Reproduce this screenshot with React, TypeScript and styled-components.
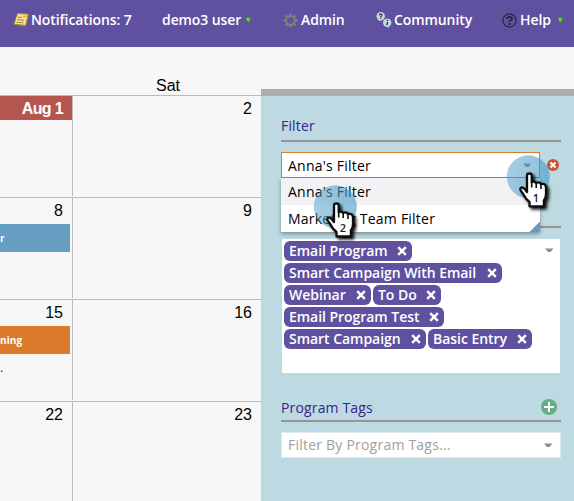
import React from "react";
import styled, { createGlobalStyle, css } from "styled-components";

const GlobalStyle = createGlobalStyle`
  * { box-sizing: border-box; }
  body {
    margin: 0;
    background: #f7f7f7;
    font-family: "Open Sans", "Noto Sans", sans-serif;
    overflow: hidden;
  }
  svg { display: block; flex: none; }
`;

const Page = styled.div`
  width: 574px;
  height: 501px;
  display: flex;
  flex-direction: column;
  overflow: hidden;
  position: relative;
`;

const TopBar = styled.header`
  height: 47px;
  flex: none;
  display: flex;
  background: #5f519f;
  padding: 9px 0 0 13px;
`;

const NavItem = styled.a<{ $width: number }>`
  width: ${(p) => p.$width}px;
  height: 22px;
  flex: none;
  display: flex;
  align-items: center;
  color: #fff;
  font-size: 14px;
  font-weight: 600;
  line-height: 22px;
  white-space: nowrap;
`;

const NavIcon = styled.span<{ $width: number }>`
  width: ${(p) => p.$width}px;
  flex: none;
`;

const NavLabel = styled.span<{ $width: number }>`
  width: ${(p) => p.$width}px;
  flex: none;
  letter-spacing: -0.09px;
`;

const Body = styled.div`
  flex: 1;
  display: flex;
  min-height: 0;
`;

const Calendar = styled.main`
  width: 261px;
  flex: none;
  font-family: "Liberation Sans", Arial, sans-serif;
  color: #000;
`;

const DayNames = styled.div`
  height: 48px;
  display: grid;
  grid-template-columns: 73px 1fr;
  align-items: end;
  text-align: center;
  font-size: 16px;
  line-height: 18px;
  padding: 0 0 0 2px;
`;

const Week = styled.div`
  height: 102px;
  border-top: 1px solid #bcbcbc;
  display: grid;
  grid-template-columns: 73px 1fr;
  padding-bottom: 1px;
`;

const Day = styled.div<{ $divider?: boolean }>`
  ${(p) => p.$divider && css`border-right: 1px solid #bcbcbc;`}
  overflow: hidden;
`;

const DayNumber = styled.div<{ $today?: boolean; $inset: number }>`
  height: 24px;
  padding-right: ${(p) => p.$inset}px;
  text-align: right;
  font-size: 16px;
  line-height: 25px;
  ${(p) =>
    p.$today &&
    css`
      background: #b5554f;
      color: #fff;
      font-weight: bold;
      letter-spacing: -0.65px;
    `}
`;

const CalendarEvent = styled.div<{ $color: string }>`
  width: 70px;
  height: 28px;
  margin-top: 2px;
  background: ${(p) => p.$color};
  color: #fff;
  font: 700 10px/28px "Open Sans", sans-serif;
  letter-spacing: 0.1px;
`;

const More = styled.div`
  font-size: 12px;
  line-height: 28px;
`;

const Panel = styled.aside`
  flex: 1;
  margin-top: 42px;
  border-top: 7px solid #adacb1;
  background: #bdd9e1;
  padding: 20px 13px 0 20px;
`;

const SectionTitle = styled.h2<{ $height: number }>`
  margin: 0;
  height: ${(p) => p.$height}px;
  border-bottom: 2px solid #959595;
  display: flex;
  justify-content: space-between;
  padding-right: 4px;
  color: #38238c;
  font-size: 14px;
  font-weight: 400;
  line-height: 20px;
  letter-spacing: 0.15px;
`;

const SelectRow = styled.div`
  height: 26px;
  margin-top: 10px;
  display: flex;
  align-items: center;
  gap: 7px;
  position: relative;
`;

const Select = styled.div<{ $active?: boolean }>`
  width: ${(p) => (p.$active ? 259 : 280)}px;
  height: 26px;
  border: 1px solid ${(p) => (p.$active ? "#d77a29" : "#deebec")};
  background: #fff;
  display: flex;
  align-items: center;
  justify-content: space-between;
  padding: 0 7px 0 6px;
  font-size: 14px;
  line-height: 24px;
  color: ${(p) => (p.$active ? "#000" : "#a0a0a0")};
  letter-spacing: 0.22px;
`;

const SelectValue = styled.span<{ $drop: number }>`
  padding-top: ${(p) => p.$drop}px;
`;

const Menu = styled.div`
  position: absolute;
  z-index: 2;
  left: 0;
  top: 26px;
  width: 259px;
  height: 54px;
  background: linear-gradient(135deg, transparent 50%, #669dc4 50%) right bottom / 10px 10px no-repeat, #fff;
  box-shadow: 0 2px 4px rgba(0, 0, 0, 0.35);
`;

const Option = styled.div<{ $highlight?: boolean }>`
  height: 27px;
  padding-left: 7px;
  font-size: 14px;
  line-height: 27px;
  letter-spacing: 0.22px;
  ${(p) => p.$highlight && css`background: #f2f2f5;`}
`;

const HiddenRule = styled.div`
  height: 2px;
  margin: 48px 0 11px;
  background: #959595;
`;

const TagBox = styled.div`
  width: 278px;
  height: 134px;
  margin-left: 1px;
  background: #fff;
  display: flex;
  justify-content: space-between;
  padding: 2px 6px 0 2px;
`;

const TagLines = styled.div`
  display: flex;
  flex-direction: column;
  gap: 2px;
`;

const TagLine = styled.div`
  display: flex;
  gap: 2px;
`;

const Tag = styled.span<{ $width: number }>`
  width: ${(p) => p.$width}px;
  height: 20px;
  border-radius: 6px;
  background: #5f519f;
  color: #fff;
  display: flex;
  align-items: center;
  justify-content: space-between;
  padding: 0 5px;
  font-size: 14px;
  font-weight: 600;
  line-height: 20px;
  letter-spacing: -0.04px;
  white-space: nowrap;
`;

const ArrowSlot = styled.div`
  padding-top: 7px;
`;

const Pointer = styled.div<{ $x: number; $y: number }>`
  position: absolute;
  z-index: 5;
  left: ${(p) => p.$x}px;
  top: ${(p) => p.$y}px;
`;

const NoteIcon = () => (
  <svg width="16" height="16" viewBox="0 0 16 16">
    <path d="M4.6 1.5 15.2 2.2 12.7 13.8 1 12.3Z" fill="#f7e69a" stroke="#b98c25" strokeWidth=".8" />
    <path d="m1 12 11.5 1.5L15 4" fill="none" stroke="#a98c28" />
    <path d="m5 5 4 .5M4.3 7.5l7 .8M3.5 10l7 .9" stroke="#8d773b" strokeWidth=".9" />
    <circle cx="11.5" cy="3.8" r="2" fill="#f6ac38" />
    <circle cx="11" cy="3.3" r=".8" fill="#fff2a5" />
  </svg>
);

const GreenArrow = () => (
  <svg width="7" height="7" viewBox="0 0 7 7">
    <path d="M.4.8h6.2L3.5 6.6Z" fill="#52b32b" stroke="#3c7d33" strokeWidth=".6" />
    <path d="M1.5 1.4h3L3 4.2Z" fill="#9be56b" />
  </svg>
);

const GearIcon = () => (
  <svg width="15" height="15" viewBox="0 0 15 15">
    <g stroke="#807d7b" strokeWidth="2.6">
      <path d="M7.5.4v14.2M.4 7.5h14.2M2.5 2.5l10 10M12.5 2.5l-10 10" />
    </g>
    <circle cx="7.5" cy="7.5" r="5.2" fill="#807d7b" />
    <circle cx="7.5" cy="7.5" r="3.3" fill="#5f519f" />
  </svg>
);

const CommunityIcon = () => (
  <svg width="16" height="16" viewBox="0 0 16 16">
    <path d="m3 6-.2 3.4 3.2-2ZM13 13v2.8l-3-1.5Z" fill="#b9cbd4" />
    <circle cx="4.7" cy="4.3" r="4.2" fill="#c5d6dd" />
    <circle cx="11.2" cy="10.8" r="4.2" fill="#c5d6dd" />
    <path d="M3.4 3.3c0-2 3-1.7 2.5.1C5.5 4.1 4.7 4 4.7 5" fill="none" stroke="#202936" strokeWidth="1.1" />
    <path d="M4.1 6.2h1.2M10.7 8.3h1.3M11.4 9.9v1.8l-.9 1.3" fill="none" stroke="#202936" strokeWidth="1.2" />
  </svg>
);

const HelpIcon = () => (
  <svg width="15" height="15" viewBox="0 0 15 15" fill="none" stroke="#28233a">
    <circle cx="7.5" cy="7.5" r="6.6" strokeWidth="1.1" />
    <path d="M5 6C5.1 3.2 10 3.2 9.9 5.8 9.8 7.4 7.5 7.3 7.5 9" strokeWidth="1.8" />
    <path d="M6.5 11h2" strokeWidth="1.8" />
  </svg>
);

const DownArrow = () => (
  <svg width="9" height="5" viewBox="0 0 9 5">
    <path d="M0 .5h8.5L5.5 4h-2.5Z" fill="#8e8e8e" />
  </svg>
);

const CrossIcon = () => (
  <svg width="10" height="10" viewBox="0 0 10 10">
    <path d="m1.2 1.2 7.6 7.6M8.8 1.2 1.2 8.8" stroke="#fff" strokeWidth="2.4" />
  </svg>
);

const ClearIcon = () => (
  <svg width="12" height="12" viewBox="0 0 12 12">
    <circle cx="6" cy="6" r="6" fill="#c65436" />
    <path d="m3.5 3.5 5 5M8.5 3.5l-5 5" stroke="#fff" strokeWidth="2.1" />
  </svg>
);

const PlusIcon = () => (
  <svg width="16" height="18" viewBox="0 0 16 18">
    <circle cx="8" cy="9" r="8" fill="#64ae87" />
    <path d="M8 4v10M3 9h10" stroke="#fff" strokeWidth="2" />
  </svg>
);

const HandPointer = ({ id, label }: { id: string; label: string }) => (
  <svg width="60" height="66" viewBox="0 0 60 66">
    <defs>
      <linearGradient id={`halo-${id}`} x1="0" x2="1">
        <stop offset="0" stopColor="#4e9cca" stopOpacity=".5" />
        <stop offset="1" stopColor="#3a95c3" stopOpacity=".58" />
      </linearGradient>
      <filter id={`soften-${id}`}>
        <feGaussianBlur stdDeviation=".6" />
      </filter>
      <filter id={`shade-${id}`} x="-40%" y="-30%" width="190%" height="180%">
        <feDropShadow dx="2.2" dy="2.2" stdDeviation="1.8" floodColor="#000" floodOpacity=".9" />
      </filter>
    </defs>
    <circle cx="28.3" cy="26.8" r="21.5" fill={`url(#halo-${id})`} filter={`url(#soften-${id})`} />
    <g filter={`url(#shade-${id})`} strokeLinejoin="round">
      <path
        d="M27 42V25.2C27 22.9 31.7 22.9 31.7 25.2V32Q34 30.5 36 33Q39.3 31.5 41 34Q45.3 33 46 37V44Q46 48 43.9 50.5V56.3H29.5V52Q25.5 49 23.5 44.5L20.5 40.2C19.6 38.4 21.2 36.9 23 37.8Q25 39 27 42Z"
        fill="#fff"
        stroke="#0c0c0c"
        strokeWidth="2.3"
      />
      <path d="M31.7 31v6.5M36.2 33v5M41 34v5" fill="none" stroke="#111" strokeWidth="1.6" />
    </g>
    <text x="36" y="51.6" textAnchor="middle" fontFamily="Open Sans" fontSize="11" fontWeight="600" fill="#222">
      {label}
    </text>
  </svg>
);

const weeks = [
  { fri: "Aug 1", sat: "2", today: true },
  { fri: "8", sat: "9", event: "r", color: "#669dc3" },
  { fri: "15", sat: "16", event: "ning", color: "#d97b2b", more: "." },
  { fri: "22", sat: "23" },
];

const tagLines = [
  [{ name: "Email Program", width: 128 }],
  [{ name: "Smart Campaign With Email", width: 218 }],
  [{ name: "Webinar", width: 87 }, { name: "To Do", width: 68 }],
  [{ name: "Email Program Test", width: 160 }],
  [{ name: "Smart Campaign", width: 142 }, { name: "Basic Entry", width: 104 }],
];

export default function App() {
  return (
    <Page>
      <GlobalStyle />
      <TopBar>
        <NavItem $width={149}>
          <NavIcon $width={18}><NoteIcon /></NavIcon>
          <NavLabel $width={102}>Notifications: 7</NavLabel>
        </NavItem>
        <NavItem $width={121}>
          <NavLabel $width={83}>demo3 user</NavLabel>
          <GreenArrow />
        </NavItem>
        <NavItem $width={93}>
          <NavIcon $width={18}><GearIcon /></NavIcon>
          <NavLabel $width={45}>Admin</NavLabel>
        </NavItem>
        <NavItem $width={126}>
          <NavIcon $width={18}><CommunityIcon /></NavIcon>
          <NavLabel $width={78}>Community</NavLabel>
        </NavItem>
        <NavItem $width={72}>
          <NavIcon $width={18}><HelpIcon /></NavIcon>
          <NavLabel $width={37}>Help</NavLabel>
          <GreenArrow />
        </NavItem>
      </TopBar>
      <Body>
        <Calendar>
          <DayNames><span /><span>Sat</span></DayNames>
          {weeks.map((w) => (
            <Week key={w.fri}>
              <Day $divider>
                <DayNumber $today={w.today} $inset={9}>{w.fri}</DayNumber>
                {w.event && <CalendarEvent $color={w.color!}>{w.event}</CalendarEvent>}
                {w.more && <More>{w.more}</More>}
              </Day>
              <Day><DayNumber $inset={9}>{w.sat}</DayNumber></Day>
            </Week>
          ))}
        </Calendar>
        <Panel>
          <SectionTitle $height={26}>Filter</SectionTitle>
          <SelectRow>
            <Select $active><SelectValue $drop={2}>Anna's Filter</SelectValue><DownArrow /></Select>
            <ClearIcon />
            <Menu>
              <Option $highlight>Anna's Filter</Option>
              <Option>Marketing Team Filter</Option>
            </Menu>
          </SelectRow>
          <HiddenRule />
          <TagBox>
            <TagLines>
              {tagLines.map((line) => (
                <TagLine key={line[0].name}>
                  {line.map((t) => (
                    <Tag key={t.name} $width={t.width}>{t.name}<CrossIcon /></Tag>
                  ))}
                </TagLine>
              ))}
            </TagLines>
            <ArrowSlot><DownArrow /></ArrowSlot>
          </TagBox>
          <ProgramTags />
        </Panel>
      </Body>
      <Pointer $x={500} $y={150}><HandPointer id="first" label="1" /></Pointer>
      <Pointer $x={307} $y={180}><HandPointer id="second" label="2" /></Pointer>
    </Page>
  );
}

const ProgramTagsSection = styled.section`
  padding-top: 25px;
`;

function ProgramTags() {
  return (
    <ProgramTagsSection>
      <SectionTitle $height={24}>Program Tags<PlusIcon /></SectionTitle>
      <SelectRow>
        <Select><SelectValue $drop={0}>Filter By Program Tags...</SelectValue><DownArrow /></Select>
      </SelectRow>
    </ProgramTagsSection>
  );
}
